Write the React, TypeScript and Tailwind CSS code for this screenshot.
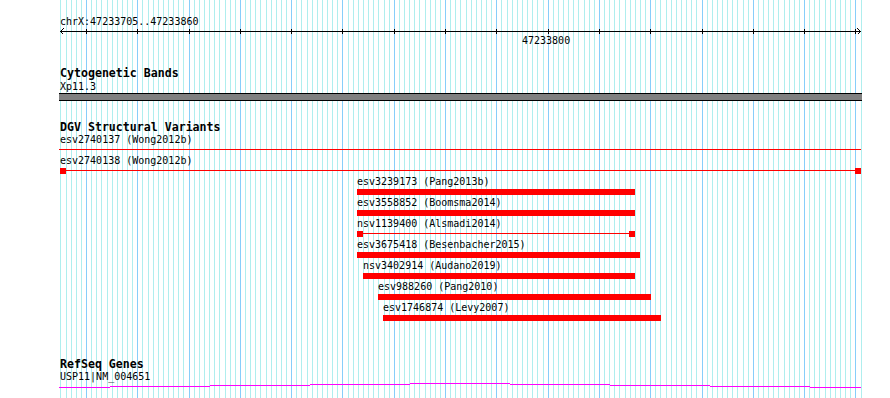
import React from 'react';

// track panel starts at x=59 on the page, 803px wide
const LEFT = 59;
const gridX = (k: number) => Math.round(60.4 + k * 5.129);

type Feature = {
  label: string;
  x1: number;
  x2: number;
  kind: 'line' | 'bar' | 'split';
  caps?: boolean;
};

const features: Feature[] = [
  { label: 'esv2740137 (Wong2012b)', x1: 59, x2: 861, kind: 'line' },
  { label: 'esv2740138 (Wong2012b)', x1: 59, x2: 861, kind: 'line', caps: true },
  { label: 'esv3239173 (Pang2013b)', x1: 357, x2: 635, kind: 'bar' },
  { label: 'esv3558852 (Boomsma2014)', x1: 357, x2: 635, kind: 'bar' },
  { label: 'nsv1139400 (Alsmadi2014)', x1: 357, x2: 635, kind: 'split' },
  { label: 'esv3675418 (Besenbacher2015)', x1: 357, x2: 640, kind: 'bar' },
  { label: 'nsv3402914 (Audano2019)', x1: 363, x2: 635, kind: 'bar' },
  { label: 'esv988260 (Pang2010)', x1: 378, x2: 651, kind: 'bar' },
  { label: 'esv1746874 (Levy2007)', x1: 383, x2: 661, kind: 'bar' },
];

// intron "hat" drawn as pixel steps [x1, x2, y]
const intron: [number, number, number][] = [
  [59, 110, 4],
  [110, 210, 3],
  [210, 310, 2],
  [310, 410, 1],
  [410, 510, 0],
  [510, 610, 1],
  [610, 710, 2],
  [710, 810, 3],
  [810, 861, 4],
];

function Grid() {
  return (
    <svg className="absolute inset-0" width={890} height={398} shapeRendering="crispEdges">
      {Array.from({ length: 157 }, (_, k) => (
        <rect
          key={k}
          x={gridX(k)}
          y={0}
          width={1}
          height={398}
          fill={k % 10 === 5 ? '#87cefa' : '#afeeee'}
        />
      ))}
    </svg>
  );
}

function Ruler() {
  const ticks = Array.from({ length: 16 }, (_, i) => gridX(5 + i * 10) - LEFT);
  return (
    <div className="flex h-[20px] flex-col">
      <svg width={803} height={6} shapeRendering="crispEdges" className="block">
        <rect x={1} y={3} width={801} height={1} fill="#000" />
        {ticks.map((x) => (
          <rect key={x} x={x} y={1} width={1} height={5} fill="#000" />
        ))}
        <polyline points="4.5,0.5 1.5,3.5 4.5,6.5" fill="none" stroke="#000" strokeWidth={1} />
        <polyline points="798.5,0.5 801.5,3.5 798.5,6.5" fill="none" stroke="#000" strokeWidth={1} />
      </svg>
      <div className="pl-[463px] text-[10px] leading-[13px] whitespace-pre">47233800</div>
    </div>
  );
}

const Red = ({ className = '' }: { className?: string }) => (
  <div className={`shrink-0 bg-[#ff0000] ${className}`} />
);

function Row({ f }: { f: Feature }) {
  const labelX = f.kind === 'line' ? 1 : f.x1 - LEFT;
  const x1 = f.x1 - LEFT;
  const w = f.x2 - f.x1;
  return (
    <div className="flex h-[21px] flex-col gap-[1px]">
      <div className="h-[13px] text-[10px] leading-[13px] whitespace-pre" style={{ paddingLeft: labelX }}>
        {f.label}
      </div>
      <div className="flex h-[6px] items-start" style={{ paddingLeft: x1 }}>
        {f.kind === 'bar' ? (
          <div className="h-[6px] bg-[#ff0000]" style={{ width: w }} />
        ) : (
          <div className="flex h-[6px] items-start" style={{ width: w }}>
            {(f.kind === 'split' || f.caps) && (
              <Red className={`h-[6px] w-[6px] ${f.caps ? 'ml-[1px]' : ''}`} />
            )}
            <Red className="mt-[2px] h-[1px] flex-1" />
            {(f.kind === 'split' || f.caps) && <Red className="h-[6px] w-[6px]" />}
          </div>
        )}
      </div>
    </div>
  );
}

export default function App() {
  const heading = 'h-[12px] pl-[1px] text-[11.6px] font-bold leading-[12px] whitespace-pre';
  const text = 'h-[13px] pl-[1px] text-[10px] leading-[13px] whitespace-pre';

  return (
    <div className="relative h-[398px] w-[890px] overflow-hidden bg-white text-black font-['DejaVu_Sans_Mono',monospace]">
      <Grid />
      <div className="relative ml-[59px] flex w-[803px] flex-col pt-[15px]">
        <div className={text}>chrX:47233705..47233860</div>
        <Ruler />

        <div className={`mt-[19px] ${heading}`}>Cytogenetic Bands</div>
        <div className={`mt-[1px] ${text}`}>Xp11.3</div>
        <div className="h-[8px] border-y border-black bg-[#808080]" />

        <div className={`mt-[20px] ${heading}`}>DGV Structural Variants</div>
        <div className="flex flex-col">
          {features.map((f) => (
            <Row key={f.label} f={f} />
          ))}
        </div>

        <div className={`mt-[36px] ${heading}`}>RefSeq Genes</div>
        <div className={text}>USP11|NM_004651</div>
        <svg width={803} height={6} shapeRendering="crispEdges" className="block">
          {intron.map(([a, b, y]) => (
            <rect key={a} x={a - LEFT} y={y} width={b - a} height={1} fill="#ff00ff" />
          ))}
        </svg>
      </div>
    </div>
  );
}
